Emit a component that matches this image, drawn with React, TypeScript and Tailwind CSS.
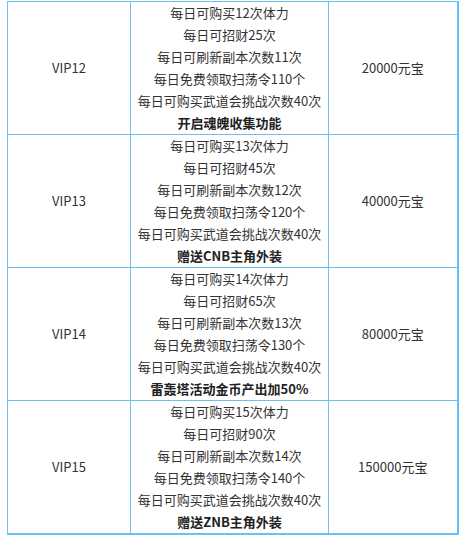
import React from 'react';

interface VipRow {
  level: string;
  perks: string[];
  bonus: string;
  price: string;
}

const rows: VipRow[] = [
  {
    level: 'VIP12',
    perks: ['每日可购买12次体力', '每日可招财25次', '每日可刷新副本次数11次', '每日免费领取扫荡令110个', '每日可购买武道会挑战次数40次'],
    bonus: '开启魂魄收集功能',
    price: '20000元宝',
  },
  {
    level: 'VIP13',
    perks: ['每日可购买13次体力', '每日可招财45次', '每日可刷新副本次数12次', '每日免费领取扫荡令120个', '每日可购买武道会挑战次数40次'],
    bonus: '赠送CNB主角外装',
    price: '40000元宝',
  },
  {
    level: 'VIP14',
    perks: ['每日可购买14次体力', '每日可招财65次', '每日可刷新副本次数13次', '每日免费领取扫荡令130个', '每日可购买武道会挑战次数40次'],
    bonus: '雷轰塔活动金币产出加50%',
    price: '80000元宝',
  },
  {
    level: 'VIP15',
    perks: ['每日可购买15次体力', '每日可招财90次', '每日可刷新副本次数14次', '每日免费领取扫荡令140个', '每日可购买武道会挑战次数40次'],
    bonus: '赠送ZNB主角外装',
    price: '150000元宝',
  },
];

export default function App() {
  return (
    <div className="w-[460px] h-[537px] bg-white pt-px pl-[7px] font-['Noto_Sans_CJK_SC','Noto_Sans',sans-serif] text-[13px] leading-[22px] text-[#333]">
      <table className="border-collapse border-r-2 border-b-2 border-r-[#5ec4f4] border-b-[#6ec1ee]">
        <tbody>
          {rows.map((row) => (
            <tr key={row.level}>
              <td className="w-[123px] border border-[#6ec1ee] text-center align-middle p-0">{row.level}</td>
              <td className="w-[198px] border border-[#6ec1ee] text-center p-0">
                {row.perks.map((p) => (
                  <div key={p}>{p}</div>
                ))}
                <div className="font-bold text-[#222]">{row.bonus}</div>
              </td>
              <td className="w-[129px] border border-[#6ec1ee] text-center align-middle p-0">{row.price}</td>
            </tr>
          ))}
        </tbody>
      </table>
    </div>
  );
}
